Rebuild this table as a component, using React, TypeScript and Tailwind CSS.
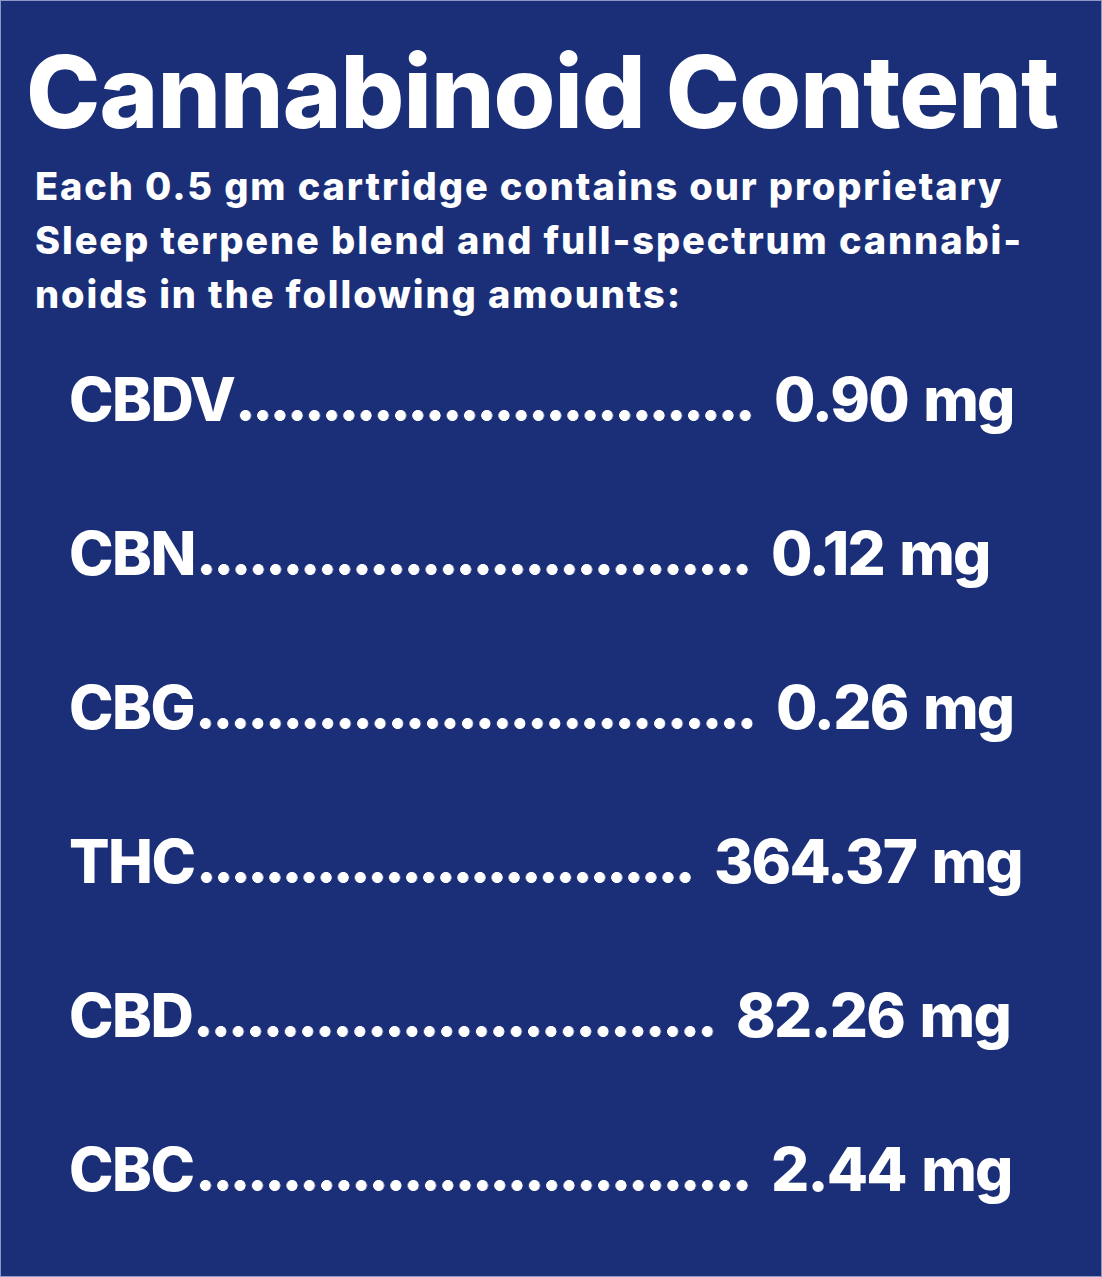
import React from 'react';

type Row = {
  label: string;
  value: string;
  // width up to where the value starts
  lead: string;
};

const rows: Row[] = [
  { label: 'CBDV', value: '0.90 mg', lead: 'w-[705px]' },
  { label: 'CBN', value: '0.12 mg', lead: 'w-[702px]' },
  { label: 'CBG', value: '0.26 mg', lead: 'w-[707px]' },
  { label: 'THC', value: '364.37 mg', lead: 'w-[645px]' },
  { label: 'CBD', value: '82.26 mg', lead: 'w-[667px]' },
  { label: 'CBC', value: '2.44 mg', lead: 'w-[702px]' },
];

const ContentRow = ({ label, value, lead }: Row) => (
  <div className="flex items-baseline h-[60px] text-[60px] leading-[60px] tracking-[-1.5px]">
    <div className={`flex items-baseline ${lead}`}>
      <span>{label}</span>
      <span className="inline-block flex-1 h-[11px] ml-[3px] mr-[20px] bg-[radial-gradient(circle,#fff_5.2px,transparent_5.8px)] bg-[length:17px_11px] bg-repeat-space" />
    </div>
    <span className="tracking-[-1.8px] [word-spacing:4px]">{value}</span>
  </div>
);

export default function App() {
  return (
    <div
      className="w-[1102px] h-[1277px] bg-[#1a2f78] border border-[#8d98c8] text-white font-extrabold overflow-hidden"
      style={{ fontFamily: 'Inter, "Noto Sans", sans-serif' }}
    >
      <h1 className="pt-[41px] pl-[25px] text-[100px] leading-[100px] tracking-[-0.9px] whitespace-nowrap">
        Cannabinoid Content
      </h1>

      <p className="mt-[17px] pl-[34px] text-[38px] leading-[54px] tracking-[1.9px] whitespace-nowrap">
        Each 0.5 gm cartridge contains our proprietary
        <br />
        Sleep terpene blend and full-spectrum cannabi-
        <br />
        noids in the following amounts:
      </p>

      <div className="mt-[48px] pl-[68px] flex flex-col gap-[94px]">
        {rows.map((r) => (
          <ContentRow key={r.label} {...r} />
        ))}
      </div>
    </div>
  );
}
